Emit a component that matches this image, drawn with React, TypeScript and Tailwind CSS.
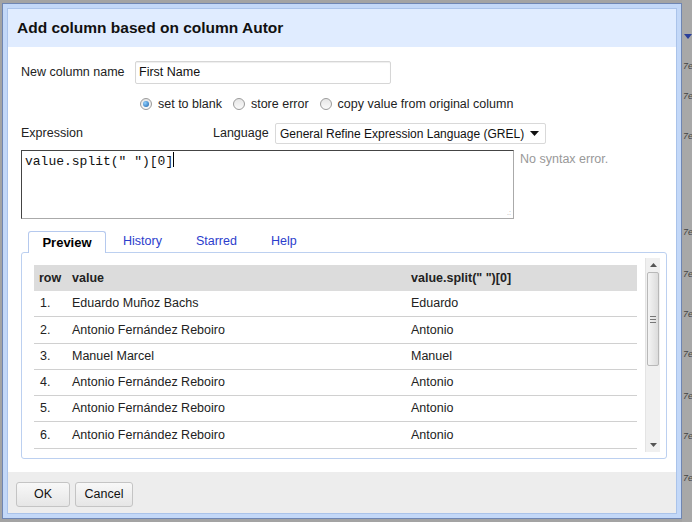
import React from "react";

const rows = [
  ["1.", "Eduardo Muñoz Bachs", "Eduardo"],
  ["2.", "Antonio Fernández Reboiro", "Antonio"],
  ["3.", "Manuel Marcel", "Manuel"],
  ["4.", "Antonio Fernández Reboiro", "Antonio"],
  ["5.", "Antonio Fernández Reboiro", "Antonio"],
  ["6.", "Antonio Fernández Reboiro", "Antonio"],
];

function Radio({ checked }: { checked?: boolean }) {
  return (
    <span className="inline-flex w-[12px] h-[12px] rounded-full border border-[#9a9a9a] bg-gradient-to-b from-[#e6e6e6] to-[#fafafa] items-center justify-center">
      {checked && <span className="w-[6px] h-[6px] rounded-full bg-[radial-gradient(circle_at_35%_35%,#8fd0ff,#1a5fa8)]" />}
    </span>
  );
}

function Tab({ label, active }: { label: string; active?: boolean }) {
  if (active) {
    return (
      <div className="h-[22px] w-[78px] flex items-center justify-center bg-white border border-b-0 border-[#b5c9ee] rounded-t-[3px] font-bold text-[13px] text-black -mb-px relative">
        {label}
      </div>
    );
  }
  return <div className="h-[21px] px-[17px] flex items-center text-[12.5px] text-[#2c3dcc]">{label}</div>;
}

function Scrollbar() {
  return (
    <div className="w-[15px] h-full flex flex-col bg-[#f0f0f0] border-l border-[#e4e4e4]">
      <div className="h-[14px] flex items-center justify-center">
        <svg width="7" height="4" viewBox="0 0 7 4"><path d="M0 4 L3.5 0 L7 4 Z" fill="#555" /></svg>
      </div>
      <div className="mx-px h-[94px] rounded-[2px] border border-[#b8b8b8] bg-gradient-to-r from-[#f4f4f4] to-[#dcdcdc] flex flex-col items-center justify-center gap-[2px]">
        <div className="w-[6px] h-px bg-[#777]" />
        <div className="w-[6px] h-px bg-[#777]" />
        <div className="w-[6px] h-px bg-[#777]" />
      </div>
      <div className="flex-1" />
      <div className="h-[14px] flex items-center justify-center">
        <svg width="7" height="4" viewBox="0 0 7 4"><path d="M0 0 L3.5 4 L7 0 Z" fill="#555" /></svg>
      </div>
    </div>
  );
}

export default function App() {
  const bgMarks = [62, 92, 132, 228, 270, 310, 350, 392, 432, 474];
  return (
    <div className="w-[692px] h-[522px] bg-[#a3a3a3] flex overflow-hidden font-['Liberation_Sans',Arial,sans-serif]">
      <div className="w-[682px] pl-[2px] pt-[3px] shrink-0">
        <div className="w-[680px] h-[516px] border border-[#6f86b3] bg-[#c3d8f8] p-[4px]">
          <div className="w-full h-full flex flex-col border border-[#aac3ea]">
            <div className="h-[38px] bg-[#e0ecff] flex items-center pl-[9px] text-[15.5px] font-bold text-[#111]">
              Add column based on column Autor
            </div>
            <div className="flex-1 bg-white pl-[13px] pr-[12px] pt-[14px] text-[12.5px] text-[#222] flex flex-col">
              <div className="flex items-center h-[23px]">
                <div className="w-[114px]">New column name</div>
                <div className="w-[256px] h-[23px] border border-[#d6d6d6] rounded-[2px] flex items-center pl-[3px] text-[#111] shadow-[inset_0_1px_1px_#eee]">
                  First Name
                </div>
              </div>
              <div className="flex items-center h-[16px] mt-[12px] pl-[119px] gap-[6px]">
                <Radio checked />
                <span className="mr-[5px]">set to blank</span>
                <Radio />
                <span className="mr-[5px]">store error</span>
                <Radio />
                <span>copy value from original column</span>
              </div>
              <div className="flex items-center h-[21px] mt-[11px]">
                <div className="w-[192px]">Expression</div>
                <div className="w-[62px]">Language</div>
                <div className="w-[271px] h-[21px] border border-[#d9d9d9] rounded-[2px] flex items-center pl-[4px] pr-[6px] justify-between text-[#111] whitespace-nowrap">
                  <span className="text-[12px]">General Refine Expression Language (GREL)</span>
                  <svg width="9" height="5" viewBox="0 0 9 5"><path d="M0 0 L4.5 5 L9 0 Z" fill="#111" /></svg>
                </div>
              </div>
              <div className="flex mt-[6px]">
                <div className="w-[493px] h-[69px] border border-t-[#444] border-l-[#444] border-r-[#aaa] border-b-[#aaa] relative px-[3px] pt-[1px]">
                  <span className="font-['Liberation_Mono','Courier_New',monospace] text-[13px] text-[#111] leading-[15px]">value.split(" ")[0]</span>
                  <span className="inline-block w-px h-[15px] bg-black align-top" />
                  <span className="absolute right-[2px] bottom-[2px] text-[7px] leading-[7px] text-[#aaa]">.:</span>
                </div>
                <div className="ml-[6px] pt-[0px] text-[#999]">No syntax error.</div>
              </div>
              <div className="flex items-end mt-[12px] pl-[7px]">
                <Tab label="Preview" active />
                <Tab label="History" />
                <Tab label="Starred" />
                <Tab label="Help" />
              </div>
              <div className="w-[646px] h-[207px] border border-[#bcd0f0] rounded-[3px] flex pl-[12px] pt-[5px] pr-[6px]">
                <div className="flex-1 pt-[7px]">
                  <div className="h-[26px] bg-[#dcdcdc] flex items-center font-bold text-[#222]">
                    <div className="w-[32px] pl-[5px]">row</div>
                    <div className="w-[339px] pl-[6px]">value</div>
                    <div className="pl-[6px]">value.split(" ")[0]</div>
                  </div>
                  {rows.map((r) => (
                    <div key={r[0]} className="h-[26.3px] border-b border-[#d0d0d0] flex items-center text-[#222]">
                      <div className="w-[32px] pl-[6px]">{r[0]}</div>
                      <div className="w-[339px] pl-[6px]">{r[1]}</div>
                      <div className="pl-[6px]">{r[2]}</div>
                    </div>
                  ))}
                </div>
                <div className="ml-[8px] h-[194px]">
                  <Scrollbar />
                </div>
              </div>
            </div>
            <div className="h-[41px] bg-[#ededed] flex items-center pl-[8px] pt-[3px] gap-[5px] text-[12.5px] text-[#111]">
              <div className="w-[54px] h-[25px] rounded-[3px] border border-[#c4c4c4] bg-gradient-to-b from-[#f8f8f8] to-[#e6e6e6] flex items-center justify-center">
                OK
              </div>
              <div className="w-[58px] h-[25px] rounded-[3px] border border-[#c4c4c4] bg-gradient-to-b from-[#f8f8f8] to-[#e6e6e6] flex items-center justify-center">
                Cancel
              </div>
            </div>
          </div>
        </div>
      </div>
      <div className="flex-1 relative bg-[#a8a8a8]">
        <svg className="absolute left-[2px] top-[34px]" width="8" height="5" viewBox="0 0 8 5"><path d="M0 0 L4 5 L8 0 Z" fill="#2a3f9a" /></svg>
        {bgMarks.map((y) => (
          <span key={y} className="absolute left-[1px] text-[9px] italic text-[#444] leading-none" style={{ top: y }}>
            7e
          </span>
        ))}
      </div>
    </div>
  );
}
